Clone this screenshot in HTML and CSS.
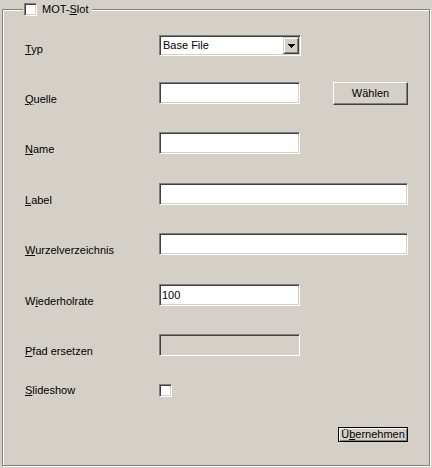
FILE: index.html
```html
<!DOCTYPE html>
<html lang="de">
<head>
<meta charset="utf-8">
<title>MOT-Slot</title>
<link rel="stylesheet" href="styles.css">
</head>
<body>
<div class="group">
  <div class="legend">
    <input type="checkbox" class="chk" aria-label="MOT-Slot">
    <span class="legend-text">MOT-<u>S</u>lot</span>
  </div>
  <div class="form">
    <label class="lbl lbl-combo"><u>T</u>yp</label>
    <div class="combo">
      <span class="combo-text">Base File</span>
      <span class="combo-btn">
        <svg width="7" height="4" viewBox="0 0 7 4" shape-rendering="crispEdges"><rect x="0" y="0" width="7" height="1" fill="#000"/><rect x="1" y="1" width="5" height="1" fill="#000"/><rect x="2" y="2" width="3" height="1" fill="#000"/><rect x="3" y="3" width="1" height="1" fill="#000"/></svg>
      </span>
    </div>

    <label class="lbl"><u>Q</u>uelle</label>
    <input class="field field-short" type="text">
    <button class="btn btn-choose" type="button">Wählen</button>

    <label class="lbl"><u>N</u>ame</label>
    <input class="field field-short" type="text">

    <label class="lbl"><u>L</u>abel</label>
    <input class="field field-wide" type="text">

    <label class="lbl"><u>W</u>urzelverzeichnis</label>
    <input class="field field-wide" type="text">

    <label class="lbl">W<u>i</u>ederholrate</label>
    <input class="field field-short" type="text" value="100">

    <label class="lbl"><u>P</u>fad ersetzen</label>
    <input class="field field-short field-disabled" type="text" disabled>

    <label class="lbl lbl-check"><u>S</u>lideshow</label>
    <input type="checkbox" class="chk" aria-label="Slideshow">

    <button class="btn btn-apply" type="button">Ü<u>b</u>ernehmen</button>
  </div>
</div>
</body>
</html>
```
FILE: styles.css
```css
html, body {
  margin: 0;
  padding: 0;
  background: #d4d0c8;
}
body {
  width: 432px;
  height: 468px;
  overflow: hidden;
  font-family: "Liberation Sans", Arial, sans-serif;
  font-size: 11px;
  color: #000;
}
u {
  text-decoration: underline;
  text-underline-offset: 1px;
}

.group {
  position: relative;
  box-sizing: border-box;
  margin: 9px 0 0 2px;
  width: 428px;
  height: 457px;
  border: 1px solid #808080;
  box-shadow: inset 1px 1px 0 #fff, 1px 1px 0 #fff;
}

.legend {
  position: absolute;
  left: 20px;
  top: -7px;
  height: 13px;
  display: flex;
  align-items: center;
  gap: 5px;
  padding: 0 4px 0 1px;
  background: #d4d0c8;
}
.legend-text {
  line-height: 13px;
}

.chk {
  appearance: none;
  -webkit-appearance: none;
  margin: 0;
  box-sizing: border-box;
  width: 13px;
  height: 13px;
  background: #fff;
  border: 1px solid;
  border-color: #808080 #fff #fff #808080;
  box-shadow: inset 1px 1px 0 #404040, inset -1px -1px 0 #d4d0c8;
}

.form {
  display: grid;
  grid-template-columns: 134px 174px 75px;
  grid-template-rows: 47px 50px 51px 50px 51px 50px 50px 43px 15px;
  align-items: start;
  padding: 25px 0 0 22px;
}

.lbl {
  grid-column: 1;
  line-height: 13px;
  padding-top: 11px;
  white-space: nowrap;
}
.lbl-combo {
  padding-top: 8px;
}
.lbl-check {
  padding-top: 0;
}

.field {
  grid-column: 2;
  box-sizing: border-box;
  height: 22px;
  margin: 0;
  padding: 0 2px;
  font: inherit;
  color: #000;
  background: #fff;
  border: 1px solid;
  border-color: #808080 #fff #fff #808080;
  box-shadow: inset 1px 1px 0 #404040, inset -1px -1px 0 #d4d0c8;
  outline: none;
  border-radius: 0;
}
.field-short {
  width: 141px;
}
.field-wide {
  grid-column: 2 / 4;
  width: 249px;
}
.field-disabled {
  background: #d4d0c8;
}
.lbl + .chk {
  grid-column: 2;
}

.combo {
  grid-column: 2;
  box-sizing: border-box;
  width: 142px;
  height: 21px;
  display: flex;
  background: #fff;
  border: 1px solid;
  border-color: #808080 #fff #fff #808080;
  box-shadow: inset 1px 1px 0 #404040, inset -1px -1px 0 #d4d0c8;
  padding: 1px;
}
.combo-text {
  flex: 1;
  line-height: 17px;
  padding-left: 2px;
}
.combo-btn {
  box-sizing: border-box;
  width: 16px;
  height: 17px;
  display: flex;
  align-items: center;
  justify-content: center;
  background: #d4d0c8;
  border: 1px solid;
  border-color: #d4d0c8 #404040 #404040 #d4d0c8;
  box-shadow: inset 1px 1px 0 #fff, inset -1px -1px 0 #808080;
}
.combo-btn svg {
  display: block;
}

.btn {
  box-sizing: border-box;
  margin: 0;
  padding: 0;
  font: inherit;
  color: #000;
  background: #d4d0c8;
  border-radius: 0;
  line-height: 13px;
}
.btn-choose {
  grid-column: 3;
  width: 75px;
  height: 23px;
  border: 1px solid;
  border-color: #fff #404040 #404040 #fff;
  box-shadow: inset -1px -1px 0 #808080;
}
.btn-apply {
  grid-column: 3;
  grid-row: 9;
  justify-self: end;
  width: 70px;
  height: 15px;
  border: 1px solid #000;
  box-shadow: inset 1px 1px 0 #fff, inset -1px -1px 0 #808080;
}
```
